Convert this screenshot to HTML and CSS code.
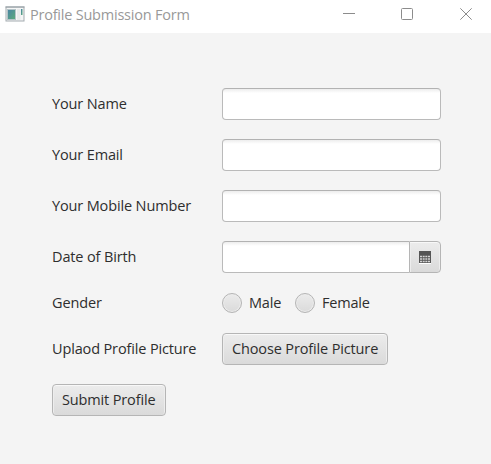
FILE: index.html
```html
<!DOCTYPE html>
<html lang="en">
<head>
<meta charset="utf-8">
<title>Profile Submission Form</title>
<link rel="stylesheet" href="styles.css">
</head>
<body>
<header class="titlebar">
  <svg class="app-icon" width="20" height="16" viewBox="0 0 20 16">
    <defs><linearGradient id="pane" x1="0" y1="0" x2="1" y2="1"><stop offset="0" stop-color="#4a84a6"/><stop offset="1" stop-color="#5bac7a"/></linearGradient></defs>
    <rect x="1" y="1" width="18" height="14" fill="#f5f6f6" stroke="#a3abb0"/>
    <path d="M0.5 1H19.5" stroke="#929ca2"/>
    <rect x="2.5" y="3.5" width="8" height="10" fill="url(#pane)" stroke="#b4c4c8"/>
    <rect x="12" y="3" width="3.500" height="11" fill="#e8eaeb"/>
    <rect x="16" y="3" width="1.500" height="6" fill="url(#pane)"/>
  </svg>
  <h1 class="title"><span class="title-text">Profile Submission Form</span></h1>
  <div class="controls">
    <svg width="12" height="12" viewBox="0 0 12 12"><path d="M0 5.500H12"/></svg>
    <svg width="12" height="12" viewBox="0 0 12 12"><rect x=".5" y=".5" width="11" height="11" rx="1"/></svg>
    <svg class="close" width="12" height="12" viewBox="0 0 12 12"><path d="M.3.300 11.700 11.700M11.700.300.300 11.700"/></svg>
  </div>
</header>
<form class="form">
  <label class="label" for="name">Your Name</label>
  <input class="field" id="name" type="text">
  <label class="label" for="email">Your Email</label>
  <input class="field" id="email" type="text">
  <label class="label" for="mobile">Your Mobile Number</label>
  <input class="field" id="mobile" type="text">
  <label class="label" for="dob">Date of Birth</label>
  <div class="date">
    <input class="field date-field" id="dob" type="text">
    <button class="date-button" type="button" aria-label="Open calendar">
      <svg width="12" height="13" viewBox="0 0 12 13">
        <path d="M0 12.500H12" stroke="#fff"/>
        <path d="M0 0H12V12H0Z" fill="#555"/>
        <path d="M1 5.500H11M1 8H11M1 10.500H11" stroke="#d4d4d4" stroke-width="1.300" stroke-dasharray="2 .67"/>
      </svg>
    </button>
  </div>
  <span class="label">Gender</span>
  <div class="radios">
    <label class="radio"><span class="dot"></span><span>Male</span></label>
    <label class="radio"><span class="dot"></span><span>Female</span></label>
  </div>
  <span class="label">Uplaod Profile Picture</span>
  <button class="button choose" type="button"><span>Choose Profile Picture</span></button>
  <button class="button submit" type="button"><span>Submit Profile</span></button>
</form>
</body>
</html>
```
FILE: styles.css
```css
* { box-sizing: border-box; }
body {
  margin: 0;
  height: 464px;
  overflow: hidden;
  background: #f4f4f4;
  color: #2e2e2e;
  font: 14.5px/20px "Open Sans", "Noto Sans", sans-serif;
  letter-spacing: -0.14px;
  white-space: nowrap;
}
.titlebar {
  display: flex;
  align-items: center;
  height: 33px;
  padding: 0 19px 5px 5px;
  background: #fff;
}
.app-icon { margin-right: 5px; }
.title {
  margin: 0;
  font-size: 14.5px;
  font-weight: 400;
  letter-spacing: -0.22px;
  color: #999;
}
.title-text { display: block; padding-top: 2px; }
.controls {
  display: flex;
  gap: 46px;
  margin-left: auto;
  fill: none;
  stroke: #8c8c8c;
}
.close { margin-left: 1px; }
.form {
  display: grid;
  grid-template-columns: 170px 219px;
  grid-template-rows: repeat(4, 32px) 22px repeat(2, 32px);
  row-gap: 19px;
  align-items: center;
  padding: 55px 0 0 52px;
}
.field {
  width: 100%;
  height: 32px;
  margin: 0;
  padding: 5px 9px;
  border: 1px solid #bababa;
  border-top-color: #b2b2b2;
  border-radius: 4px;
  outline: none;
  background: linear-gradient(#ededed, #fff 4px);
  font: inherit;
}
.date { display: flex; }
.date-field { flex: 1; min-width: 0; border-right: 0; border-radius: 4px 0 0 4px; }
.date-button {
  display: grid;
  place-items: center;
  width: 32px;
  height: 32px;
  padding: 1px 0 0;
  border: 1px solid #b5b5b5;
  border-radius: 0 4px 4px 0;
  background: linear-gradient(#ececec, #dadada);
  box-shadow: inset 0 1px #f8f8f8, inset 1px 0 #ededed, inset -1px 0 #ededed;
}
.radios { display: grid; grid-template-columns: 73px auto; justify-content: start; }
.radio { display: flex; align-items: center; gap: 7px; letter-spacing: -0.2px; }
.dot {
  width: 20px;
  height: 20px;
  border: 1px solid #b5b5b5;
  border-radius: 50%;
  background: linear-gradient(#ebebeb, #dadada);
  box-shadow: inset 0 0 0 1px #ececec;
}
.button {
  height: 32px;
  padding: 0 0 0 9px;
  border: 1px solid #b5b5b5;
  border-radius: 4px;
  background: linear-gradient(#ececec, #dadada);
  box-shadow: inset 0 1px #f8f8f8, inset 1px 0 #ededed, inset -1px 0 #ededed;
  color: #2e2e2e;
  font: inherit;
  letter-spacing: inherit;
  text-align: left;
}
.choose { width: 166px; }
.submit { width: 114px; }
```
